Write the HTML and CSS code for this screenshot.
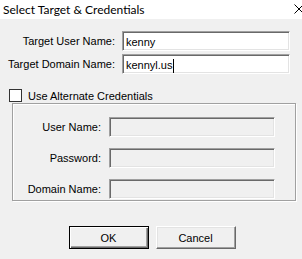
FILE: index.html
```html
<!DOCTYPE html>
<html lang="en">
<head>
    <meta charset="UTF-8">
    <meta name="viewport" content="width=device-width, initial-scale=1.0">
    <title>Select Target &amp; Credentials</title>
    <link rel="stylesheet" href="styles.css">
</head>
<body>
    <div class="titlebar">
        <span class="title">Select Target &amp; Credentials</span>
        <svg class="close" width="10" height="10" viewBox="0 0 10 10">
            <path d="M0.5 0.5 L9.5 9.5 M9.5 0.5 L0.5 9.5" stroke="#000" stroke-width="1" fill="none"/>
        </svg>
    </div>

    <div class="dialog">
        <div class="target">
            <label>Target User Name:</label>
            <div class="field">kenny</div>
            <label>Target Domain Name:</label>
            <div class="field">kennyl.us<span class="caret"></span></div>
        </div>

        <div class="check-row">
            <span class="checkbox"></span>
            <span>Use Alternate Credentials</span>
        </div>

        <div class="group">
            <label>User Name:</label>
            <div class="field disabled"></div>
            <label>Password:</label>
            <div class="field disabled"></div>
            <label>Domain Name:</label>
            <div class="field disabled"></div>
        </div>

        <div class="buttons">
            <button class="btn default">OK</button>
            <button class="btn">Cancel</button>
        </div>
    </div>
</body>
</html>
```

FILE: styles.css
```css
body {
    margin: 0;
    padding: 0;
    width: 302px;
    height: 259px;
    overflow: hidden;
    background-color: #f0f0f0;
    font-family: "Liberation Sans", Arial, sans-serif;
    font-size: 11px;
    color: #000;
}

.titlebar {
    height: 19px;
    background-color: #fff;
    display: flex;
    align-items: center;
    padding-left: 3px;
}

.title {
    font-family: Lato, "Noto Sans", sans-serif;
    font-size: 12px;
    color: #000;
}

.close {
    margin-left: auto;
    margin-right: -2px;
    margin-top: -2px;
}

.dialog {
    padding-top: 12px;
}

.target {
    display: grid;
    grid-template-columns: 115px 168px;
    column-gap: 7px;
    row-gap: 3px;
    align-items: center;
}

label {
    text-align: right;
}

.field {
    box-sizing: border-box;
    height: 20px;
    background-color: #fff;
    border-top: 1px solid #a0a0a0;
    border-left: 1px solid #a0a0a0;
    border-right: 1px solid #fff;
    border-bottom: 1px solid #fff;
    box-shadow: inset 1px 1px 0 #696969, inset -1px -1px 0 #e3e3e3;
    padding: 3px 3px 0 3px;
    line-height: 13px;
    display: flex;
    align-items: center;
}

.caret {
    display: inline-block;
    width: 1px;
    height: 14px;
    background-color: #000;
    margin-left: 1px;
}

.field.disabled {
    background-color: #f0f0f0;
}

.check-row {
    display: flex;
    align-items: center;
    gap: 6px;
    margin-top: 15px;
    padding-left: 9px;
    height: 13px;
}

.checkbox {
    box-sizing: border-box;
    width: 13px;
    height: 13px;
    border: 1px solid #333;
    background-color: #fff;
}

.group {
    box-sizing: border-box;
    margin: 1px 0 0 12px;
    width: 284px;
    height: 98px;
    border: 1px solid #a0a0a0;
    box-shadow: inset 1px 1px 0 #fff, 1px 1px 0 #fff;
    display: grid;
    grid-template-columns: 88px 166px;
    column-gap: 8px;
    row-gap: 11px;
    align-items: center;
    align-content: start;
    padding-top: 13px;
}

.buttons {
    display: flex;
    justify-content: center;
    gap: 7px;
    margin-top: 25px;
    padding-left: 2px;
}

.btn {
    box-sizing: border-box;
    width: 80px;
    height: 23px;
    font-family: "Liberation Sans", Arial, sans-serif;
    font-size: 11px;
    color: #000;
    background-color: #f0f0f0;
    border-top: 1px solid #fff;
    border-left: 1px solid #fff;
    border-right: 1px solid #696969;
    border-bottom: 1px solid #696969;
    box-shadow: inset -1px -1px 0 #a0a0a0, inset 1px 1px 0 #e3e3e3;
    padding: 0;
}

.btn.default {
    border: 1px solid #000;
    box-shadow: inset 1px 1px 0 #fff, inset -1px -1px 0 #696969, inset -2px -2px 0 #a0a0a0;
}
```
